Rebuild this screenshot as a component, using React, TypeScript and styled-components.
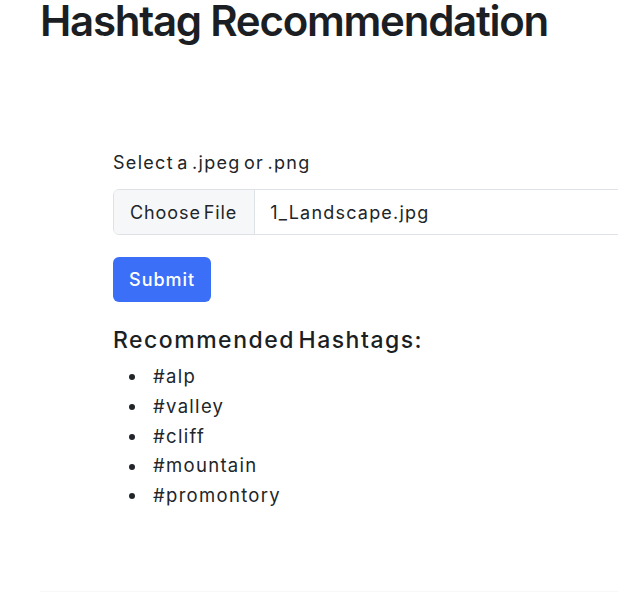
import React from "react";
import styled, { createGlobalStyle } from "styled-components";

const GlobalStyle = createGlobalStyle`
  html, body {
    margin: 0;
    padding: 0;
    background: #ffffff;
    overflow: hidden;
  }
  body {
    font-family: Inter, "Noto Sans", "Liberation Sans", sans-serif;
    color: #212529;
  }
`;

const Page = styled.div`
  display: flex;
  flex-direction: column;
  width: 618px;
  min-height: 608px;
  box-sizing: border-box;
  padding: 0 0 0 40px;
`;

const Title = styled.h1`
  margin: 0;
  font-size: 42px;
  line-height: 1;
  font-weight: 600;
  color: #1b1f24;
  letter-spacing: -1.25px;
`;

const Content = styled.main`
  display: flex;
  flex-direction: column;
  align-items: flex-start;
  width: 600px;
  margin: 109px 0 0 73px;
`;

const Label = styled.label`
  font-size: 18px;
  line-height: 24px;
  color: #212529;
  letter-spacing: 1.3px;
  word-spacing: -3px;
`;

const FileField = styled.div`
  display: flex;
  align-items: stretch;
  width: 100%;
  height: 46px;
  margin-top: 14px;
  box-sizing: border-box;
  border: 1px solid #dee2e6;
  border-radius: 6px;
  overflow: hidden;
  font-size: 18px;
`;

const FileButton = styled.span`
  display: flex;
  align-items: center;
  padding: 0 17px 0 16px;
  background: #f6f7f9;
  border-right: 1px solid #dee2e6;
  color: #212529;
  letter-spacing: 0.9px;
  word-spacing: -3px;
`;

const FileName = styled.span`
  display: flex;
  align-items: center;
  padding: 0 15px;
  color: #212529;
  letter-spacing: 1.2px;
`;

const SubmitButton = styled.button`
  margin-top: 22px;
  height: 45px;
  padding: 0 16px;
  border: none;
  border-radius: 6px;
  background: #3b6ff8;
  color: #ffffff;
  font-family: inherit;
  font-size: 18px;
  font-weight: 500;
  letter-spacing: 1px;
`;

const Heading = styled.h3`
  margin: 25px 0 0;
  font-size: 23px;
  line-height: 26px;
  font-weight: 500;
  color: #1b1f24;
  letter-spacing: 1.5px;
  word-spacing: -4px;
`;

const TagList = styled.ul`
  display: flex;
  flex-direction: column;
  margin: 9px 0 0;
  padding-left: 16px;
  list-style: none;
`;

const TagItem = styled.li`
  display: flex;
  align-items: center;
  font-size: 18.5px;
  line-height: 29.75px;
  color: #212529;
  letter-spacing: 1.3px;

  &::before {
    content: "";
    flex: none;
    width: 6px;
    height: 6px;
    margin: 1px 18px 0 0;
    border-radius: 50%;
    background: #212529;
  }
`;

const Rule = styled.hr`
  margin: auto 0 16px;
  border: none;
  border-top: 1px solid #f8f8f8;
  width: 100%;
`;

const tags = ["alp", "valley", "cliff", "mountain", "promontory"];

export default function App() {
  return (
    <>
      <GlobalStyle />
      <Page>
        <Title>Hashtag Recommendation</Title>
        <Content>
          <Label>Select a .jpeg or .png</Label>
          <FileField>
            <FileButton>Choose File</FileButton>
            <FileName>1_Landscape.jpg</FileName>
          </FileField>
          <SubmitButton>Submit</SubmitButton>
          <Heading>Recommended Hashtags:</Heading>
          <TagList>
            {tags.map((t) => (
              <TagItem key={t}>#{t}</TagItem>
            ))}
          </TagList>
        </Content>
        <Rule />
      </Page>
    </>
  );
}
